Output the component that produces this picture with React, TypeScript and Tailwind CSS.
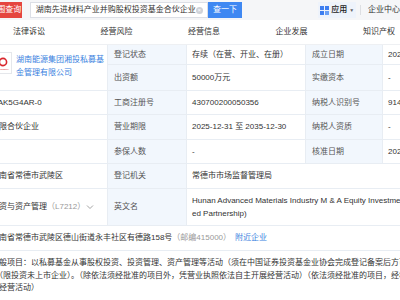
import React from "react";

const Label = ({ children, className = "" }: { children: React.ReactNode; className?: string }) => (
  <div className={`bg-[#f2f7fd] border-b border-r border-[#e8edf3] flex items-center pl-[6px] text-[#555] ${className}`}>{children}</div>
);
const Val = ({ children, className = "" }: { children?: React.ReactNode; className?: string }) => (
  <div className={`border-b border-r border-[#e8edf3] flex items-center pl-[5px] whitespace-nowrap overflow-hidden ${className}`}>{children}</div>
);

export default function App() {
  return (
    <div className="w-[400px] h-[300px] overflow-hidden bg-white font-['Liberation_Sans','Noto_Sans_CJK_SC',sans-serif] text-[8px] text-[#333] leading-none">
      {/* top bar */}
      <div className="h-[20px] bg-[#f5f6f8] flex items-center whitespace-nowrap">
        <div className="ml-[-11px] h-[16px] w-[36px] bg-[#e5453f] text-white flex items-center justify-center">范围查询</div>
        <div className="ml-[8px] h-[16px] w-[184px] bg-white border border-[#dcdfe6] flex items-center pl-[5px] pr-[4px]">
          <span className="flex-1">湖南先进材料产业并购股权投资基金合伙企业</span>
          <span className="w-[7px] h-[7px] rounded-full bg-[#cfd2d8] text-white text-[6px] flex items-center justify-center">×</span>
        </div>
        <div className="h-[16px] w-[38px] bg-[#3f88f2] text-white flex items-center justify-center">查一下</div>
        <div className="ml-[76px] h-[16px] px-[2px] flex items-center gap-[2px] bg-[#eef3fb]">
          <svg width="9" height="9" viewBox="0 0 9 9">
            <rect x="0" y="0" width="4" height="4" fill="#3d7ef0" />
            <rect x="5" y="0" width="4" height="4" fill="#3d7ef0" />
            <rect x="0" y="5" width="4" height="4" fill="#3d7ef0" />
            <rect x="5" y="5" width="4" height="4" fill="#6aa0f5" />
          </svg>
          <span className="font-medium text-[#222]">应用</span>
          <span className="text-[5px] text-[#666]">▼</span>
        </div>
        <div className="ml-[4px] w-px h-[10px] bg-[#dddfe3]" />
        <span className="ml-[7px]">企业中心</span>
      </div>
      {/* tabs */}
      <div className="h-[25px] bg-white flex items-center pl-[13px] border-b border-[#eef0f3] whitespace-nowrap">
        {["法律诉讼", "经营风险", "经营信息", "企业发展", "知识产权"].map((t) => (
          <div key={t} className="w-[87.5px] shrink-0">{t}</div>
        ))}
      </div>
      {/* table */}
      <div className="overflow-hidden">
        <div className="ml-[-16px] w-[520px] grid grid-cols-[124px_79px_119px_77px_121px] grid-rows-[20px_26px_24px_25px_24px_25px_37px_25px_60px]">
          {/* row A/B col1 */}
          <div className="row-span-2 border-b border-r border-[#e8edf3] flex items-start pt-[8px] pl-[6px]">
            <div className="w-[22px] h-[22px] border border-[#e5e7eb] bg-white flex flex-col items-center justify-center shrink-0 mt-[-1px]">
              <svg width="14" height="10" viewBox="0 0 14 10">
                <circle cx="9" cy="5" r="3.6" fill="none" stroke="#d9272d" strokeWidth="1.6" />
                <rect x="1" y="4" width="5" height="2" fill="#d9272d" />
              </svg>
              <span className="text-[2px] text-[#d9272d] leading-none mt-[1px]">HUNAN ENERGY</span>
            </div>
            <div className="ml-[4px] text-[#3a7fe0] leading-[13px] whitespace-nowrap">湖南能源集团湘投私募基<br />金管理有限公司</div>
          </div>
          <Label>登记状态</Label>
          <Val>存续（在营、开业、在册）</Val>
          <Label>成立日期</Label>
          <Val>2025-12-31</Val>

          <Label>出资额</Label>
          <Val>50000万元</Val>
          <Label>实缴资本</Label>
          <Val>-</Val>

          <Val className="pl-[7px]">MAK5G4AR-0</Val>
          <Label>工商注册号</Label>
          <Val>430700200050356</Val>
          <Label>纳税人识别号</Label>
          <Val>91430700MAK5G4AR0X</Val>

          <Val className="pl-[7px]">有限合伙企业</Val>
          <Label>营业期限</Label>
          <Val>2025-12-31 至 2035-12-30</Val>
          <Label>纳税人资质</Label>
          <Val>-</Val>

          <Val className="pl-[7px]" />
          <Label>参保人数</Label>
          <Val>-</Val>
          <Label>核准日期</Label>
          <Val>2025-12-31</Val>

          <Val className="pl-[7px]">湖南省常德市武陵区</Val>
          <Label>登记机关</Label>
          <Val className="col-span-3">常德市市场监督管理局</Val>

          <Val className="pl-[7px]">
            投资与资产管理<span className="text-[#999]">（L7212）</span>
            <svg width="8" height="6" viewBox="0 0 8 6" className="ml-[1px]"><path d="M1 1.5 L4 4.5 L7 1.5" fill="none" stroke="#999" strokeWidth="0.9" /></svg>
          </Val>
          <Label>英文名</Label>
          <Val className="col-span-3 leading-[13px]">Hunan Advanced Materials Industry M &amp; A Equity Investment (Limit<br />ed Partnership)</Val>

          <Val className="col-span-5 pl-[7px]">
            湖南省常德市武陵区德山街道永丰社区有德路158号<span className="text-[#999]">（邮编415000）</span>
            <span className="ml-[4px] text-[#3a7fe0]">附近企业</span>
          </Val>

          <div className="col-span-5 pl-[7px] pt-[6px] leading-[12.5px] whitespace-nowrap overflow-hidden">
            一般项目：以私募基金从事股权投资、投资管理、资产管理等活动（须在中国证券投资基金业协会完成登记备案后方可从事经营活动<br />
            ）（限投资未上市企业）。（除依法须经批准的项目外，凭营业执照依法自主开展经营活动）（依法须经批准的项目，经相关部门批准后方可开<br />
            展经营活动）
          </div>
        </div>
      </div>
    </div>
  );
}
